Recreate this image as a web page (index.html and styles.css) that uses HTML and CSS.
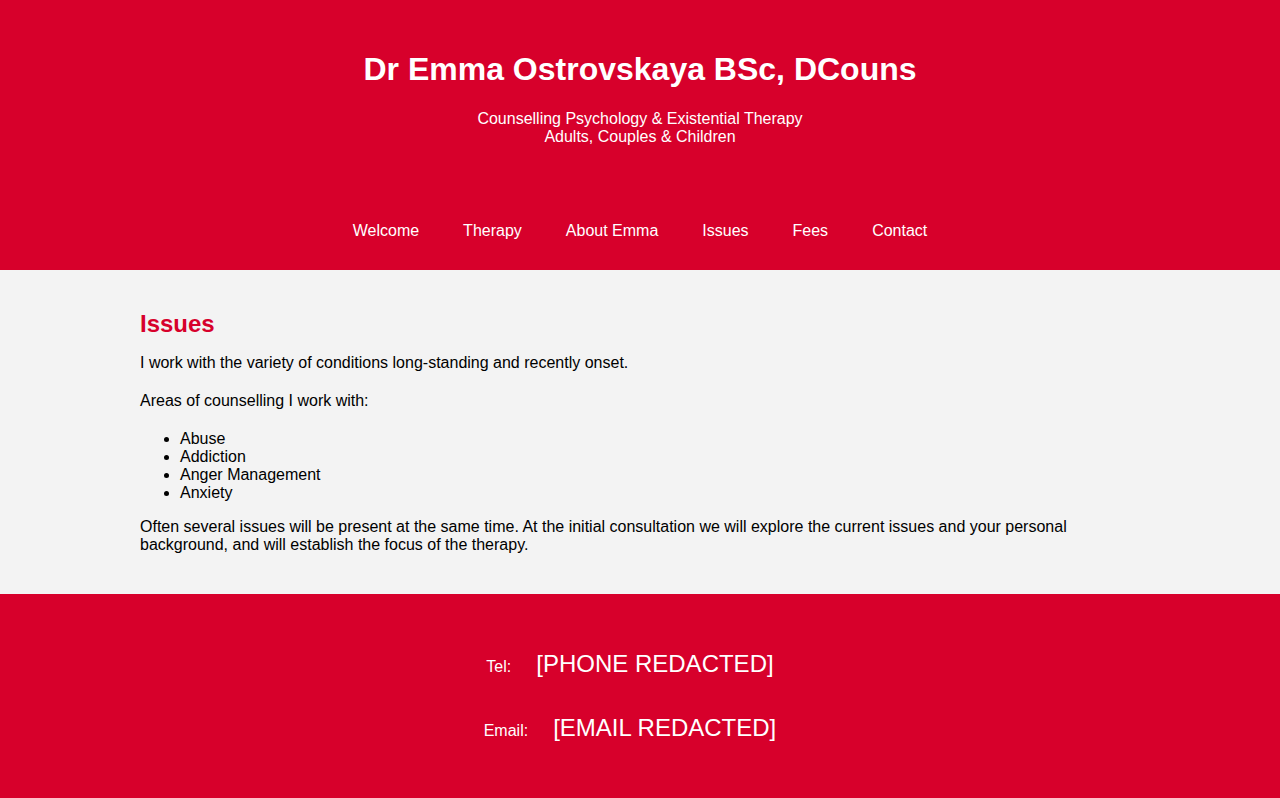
FILE: index.html
```html
<!DOCTYPE html>
<html lang="en">
<head>
<meta charset="utf-8">
<title>Dr Emma Ostrovskaya - Issues</title>
<link rel="stylesheet" href="styles.css">
</head>
<body>
<header class="site-header">
  <h1 class="site-title">Dr Emma Ostrovskaya BSc, DCouns</h1>
  <p class="site-tagline">Counselling Psychology &amp; Existential Therapy<br>Adults, Couples &amp; Children</p>
  <nav class="site-nav">
    <a href="#">Welcome</a>
    <a href="#">Therapy</a>
    <a href="#">About Emma</a>
    <a href="#">Issues</a>
    <a href="#">Fees</a>
    <a href="#">Contact</a>
  </nav>
</header>
<main class="content">
  <div class="inner">
    <h2 class="page-title">Issues</h2>
    <p class="lead">I work with the variety of conditions long-standing and recently onset.</p>
    <p class="intro">Areas of counselling I work with:</p>
    <ul class="issue-list">
      <li>Abuse</li>
      <li>Addiction</li>
      <li>Anger Management</li>
      <li>Anxiety</li>
    </ul>
    <p class="closing">Often several issues will be present at the same time. At the initial consultation we will explore the current issues and your personal background, and will establish the focus of the therapy.</p>
  </div>
</main>
<footer class="site-footer">
  <div class="contact-row"><span class="label">Tel:</span><span class="value">[PHONE REDACTED]</span></div>
  <div class="contact-row"><span class="label">Email:</span><span class="value">[EMAIL REDACTED]</span></div>
</footer>
</body>
</html>
```
FILE: styles.css
```css
html, body {
  margin: 0;
  padding: 0;
}
body {
  font-family: "Liberation Sans", Arial, Helvetica, sans-serif;
  font-size: 16px;
  line-height: 18px;
  color: #000;
  background: #f3f3f3;
}
.site-header {
  background: #d7002b;
  color: #fff;
  text-align: center;
  padding: 51px 0 30px;
}
.site-title {
  margin: 0;
  font-size: 32px;
  line-height: 37px;
  font-weight: bold;
}
.site-tagline {
  margin: 22px 0 0;
}
.site-nav {
  margin-top: 76px;
  display: flex;
  justify-content: center;
}
.site-nav a {
  color: #fff;
  text-decoration: none;
  padding: 0 22px;
}
.content {
  background: #f3f3f3;
  padding: 40px 0 40px;
}
.inner {
  width: 1000px;
  margin: 0 auto;
}
.page-title {
  margin: 0;
  color: #d7002b;
  font-size: 24px;
  line-height: 28px;
  font-weight: bold;
}
.lead {
  margin: 16px 0 0;
}
.intro {
  margin: 20px 0 0;
}
.issue-list {
  margin: 20px 0 0;
  padding-left: 40px;
}
.closing {
  margin: 16px 0 0;
}
.site-footer {
  background: #d7002b;
  color: #fff;
  padding: 56px 0 58px;
  display: flex;
  flex-direction: column;
  align-items: center;
  gap: 33px;
}
.contact-row {
  display: flex;
  align-items: baseline;
  margin-right: 20px;
  line-height: 28px;
}
.contact-row .label {
  font-size: 16px;
  margin-right: 25px;
}
.contact-row .value {
  font-size: 24px;
}
```
